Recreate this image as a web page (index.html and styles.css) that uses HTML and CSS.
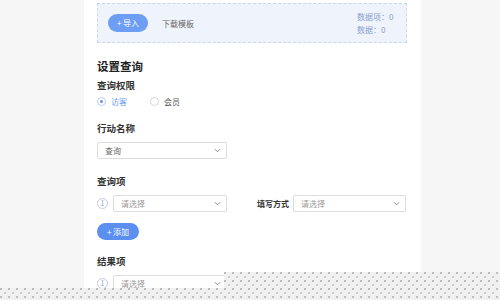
FILE: index.html
```html
<!DOCTYPE html>
<html lang="zh">
<head>
<meta charset="utf-8">
<link rel="stylesheet" href="styles.css">
</head>
<body>
<div class="page">
  <div class="side"></div>
  <main class="panel">
    <div class="upload">
      <div class="upload-left">
        <span class="btn btn-import">+ 导入</span>
        <span class="tpl">下载模板</span>
      </div>
      <div class="stats">
        <div>数据项：0</div>
        <div>数据：0</div>
      </div>
    </div>

    <h1 class="title">设置查询</h1>
    <div class="label l-perm">查询权限</div>
    <div class="radios">
      <label class="radio on"><span class="dot"></span>访客</label>
      <label class="radio"><span class="dot"></span>会员</label>
    </div>

    <div class="label l-name">行动名称</div>
    <div class="select sel-name"><span class="val">查询</span><svg class="chev" viewBox="0 0 8 5" width="7" height="5"><polyline points="1,1 4,4 7,1"/></svg></div>

    <div class="label l-q">查询项</div>
    <div class="row r-q">
      <span class="num">1</span>
      <div class="select sel-small"><span class="ph">请选择</span><svg class="chev" viewBox="0 0 8 5" width="7" height="5"><polyline points="1,1 4,4 7,1"/></svg></div>
      <span class="fill-label">填写方式</span>
      <div class="select sel-mode"><span class="ph">请选择</span><svg class="chev" viewBox="0 0 8 5" width="7" height="5"><polyline points="1,1 4,4 7,1"/></svg></div>
    </div>
    <span class="btn btn-add">+ 添加</span>

    <div class="label l-r">结果项</div>
    <div class="row r-r">
      <span class="num">1</span>
      <div class="select sel-small"><span class="ph">请选择</span><svg class="chev" viewBox="0 0 8 5" width="7" height="5"><polyline points="1,1 4,4 7,1"/></svg></div>
    </div>
  </main>
  <div class="side"></div>
</div>
<div class="torn torn-a"></div>
<div class="torn torn-b"></div>
</body>
</html>
```

FILE: styles.css
```css
* { box-sizing: border-box; margin: 0; padding: 0; }
html, body { width: 500px; height: 300px; overflow: hidden; }
body {
  background: #f6f6f6;
  font-family: "Noto Sans CJK SC", "Noto Sans", sans-serif;
  color: #333;
  position: relative;
}
.page { display: flex; height: 300px; }
.side { width: 84px; flex: none; }
.side:last-child { flex: 1; }
.panel {
  width: 337px;
  flex: none;
  background: #fff;
  padding: 3px 14px 0 13px;
  display: flex;
  flex-direction: column;
  align-items: flex-start;
}
.upload {
  width: 310px;
  height: 40px;
  background: #eef3fc;
  border: 1px dashed #c9d6ef;
  display: flex;
  align-items: center;
  justify-content: space-between;
  padding: 0 12px 0 10px;
}
.upload-left { display: flex; align-items: center; gap: 14px; }
.btn {
  display: inline-flex;
  align-items: center;
  justify-content: center;
  color: #fff;
  font-size: 8px;
  border-radius: 9px;
  height: 17px;
  line-height: 1;
  white-space: nowrap;
}
.btn-import { width: 40px; height: 18px; background: #6d9ef3; }
.tpl { font-size: 8px; color: #666; white-space: nowrap; }
.stats { font-size: 8px; color: #8da0cf; line-height: 13px; width: 37px; white-space: nowrap; }
.title { font-size: 11.5px; font-weight: 700; color: #222; line-height: 14px; margin-top: 16px; }
.label { font-size: 9.5px; font-weight: 600; color: #333; line-height: 12px; white-space: nowrap; }
.l-perm { margin-top: 6px; }
.radios { display: flex; align-items: center; margin-top: 4px; height: 12px; gap: 23px; }
.radio { display: flex; align-items: center; font-size: 8px; color: #555; }
.radio .dot {
  width: 9px; height: 9px; border-radius: 50%;
  border: 1px solid #d6d6d6; margin-right: 5px; position: relative; background: #fff;
}
.radio.on { color: #6d9ef3; }
.radio.on .dot { border-color: #b9cdf3; }
.radio.on .dot::after {
  content: ""; position: absolute; left: 2px; top: 2px; width: 3px; height: 3px;
  border-radius: 50%; background: #6d8ed6;
}
.l-name { margin-top: 15px; }
.select {
  height: 17px;
  border: 1px solid #dcdcdc;
  border-radius: 2px;
  display: flex;
  align-items: center;
  justify-content: space-between;
  padding: 0 5px 0 7px;
  font-size: 8px;
  background: #fff;
  flex: none;
}
.select .val { color: #666; }
.select .ph { color: #999; }
.chev { fill: none; stroke: #888; stroke-width: 1.1; }
.sel-name { width: 130px; margin-top: 8px; }
.l-q { margin-top: 16px; }
.row { display: flex; align-items: center; margin-top: 8px; height: 17px; }
.num {
  flex: none;
  width: 11px; height: 11px; border-radius: 50%;
  border: 1px solid #bfcbe4; color: #8aa0cf; font-size: 7px;
  display: flex; align-items: center; justify-content: center; line-height: 1;
  margin-right: 5px;
}
.sel-small { width: 114px; }
.sel-mode { width: 113px; }
.fill-label { flex: none; white-space: nowrap; font-size: 8px; color: #333; font-weight: 600; margin-left: 30px; margin-right: 4px; }
.btn-add { width: 42px; height: 17px; background: #5c90f0; margin-top: 11px; }
.l-r { margin-top: 15px; }
.torn {
  position: absolute;
  background-color: #f0f0f0;
  background-image:
    radial-gradient(circle at 1px 1px, #888 0.5px, transparent 0.9px),
    radial-gradient(circle at 1px 1px, #aaa 0.5px, transparent 0.9px);
  background-size: 8px 8px, 8px 8px;
  background-position: 0 0, 4px 4px;
}
.torn-a { left: 224px; top: 272px; width: 276px; height: 16px; }
.torn-b { left: 0; top: 288px; width: 500px; height: 12px; }
```
